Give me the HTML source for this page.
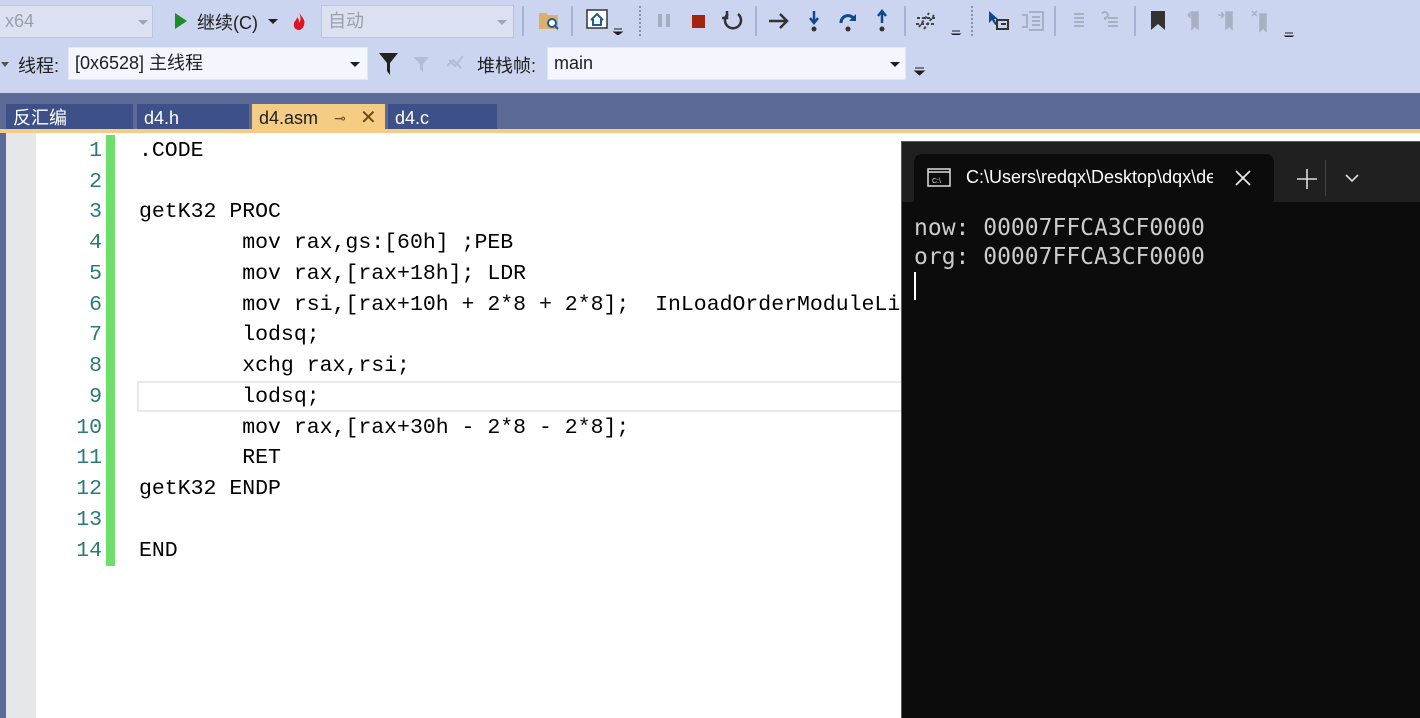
<!DOCTYPE html>
<html><head><meta charset="utf-8"><style>
*{margin:0;padding:0;box-sizing:border-box}
body{width:1420px;height:718px;overflow:hidden;background:#fff;font-family:"Liberation Sans","Noto Sans CJK SC",sans-serif;position:relative}
.abs{position:absolute}
.tb{left:0;top:0;width:1420px;height:93px;background:#ccd5f0}
.combo{position:absolute;border:1px solid #bcc5dc;font-size:18px;line-height:30px;padding-left:6px}
.arrow{position:absolute;width:0;height:0;border-left:5px solid transparent;border-right:5px solid transparent;border-top:5px solid #1e1e1e}
.sep{position:absolute;width:2px;background:#a8b3d3}
.tab{position:absolute;top:104px;height:28px;background:#3e5088;color:#fff;font-size:18px;line-height:28px;padding-left:7px}
.code{font-family:"Liberation Mono","DejaVu Sans Mono",monospace;font-size:21.5px}
.ln{position:absolute;left:40px;width:62px;text-align:right;color:#2b7a7a}
.cl{position:absolute;left:139px;white-space:pre;color:#000}
.term{font-family:"DejaVu Sans Mono","Liberation Mono",monospace;font-size:23px;color:#cccccc}
</style></head><body>
<div class="abs tb"></div>
<div class="combo" style="left:-2px;top:5px;width:155px;height:33px;background:#dbe1f1;color:#9aa0aa">x64</div>
<div class="arrow" style="left:138px;top:20px;border-top-color:#a0a6b4"></div>
<svg class="abs" style="left:174px;top:12px" width="14" height="18"><path d="M1 1L13 9L1 17Z" fill="#1f8a2c"/></svg>
<div class="abs" style="left:197px;top:9px;font-size:18px;color:#1e1e1e">继续(C)</div>
<div class="arrow" style="left:268px;top:19px"></div>
<svg class="abs" style="left:291px;top:11px" width="16" height="20"><path d="M8 1C10 6 15 8 13 14C12 18 9 19 8 19C5 19 2 17 3 12C4 9 6 9 6 6C8 8 8 10 8 12C10 10 10 6 8 1Z" fill="#e0141e"/></svg>
<div class="combo" style="left:321px;top:5px;width:193px;height:33px;background:#dbe1f1;color:#9aa0aa">自动</div>
<div class="arrow" style="left:497px;top:20px;border-top-color:#a0a6b4"></div>
<div class="sep" style="left:522px;top:6px;height:30px"></div>
<svg class="abs" style="left:537px;top:9px" width="24" height="22"><path d="M2 4h7l2 2h10v14H2Z" fill="#dcb067"/><circle cx="15" cy="14" r="4" fill="#fff" stroke="#1c5b9c" stroke-width="2"/><path d="M18 17l3 3" stroke="#1c5b9c" stroke-width="2"/></svg>
<div class="sep" style="left:571px;top:6px;height:30px"></div>
<svg class="abs" style="left:586px;top:9px" width="40" height="26"><rect x="1" y="1" width="20" height="18" fill="#fff" stroke="#333" stroke-width="1.5"/><path d="M5 11l6-6 6 6M7 10v6h8v-6" stroke="#1c5b9c" stroke-width="2" fill="none"/><path d="M28 20h8M28 23h8l-4 3z" stroke="#1e1e1e" fill="#1e1e1e"/></svg>
<div class="abs" style="left:639px;top:6px;width:4px;height:30px;border-left:2px dotted #8890a8"></div>
<svg class="abs" style="left:656px;top:12px" width="20" height="18"><rect x="2" y="2" width="4" height="13" fill="#a4acc2"/><rect x="10" y="2" width="4" height="13" fill="#a4acc2"/></svg>
<svg class="abs" style="left:690px;top:12px" width="18" height="18"><rect x="2" y="3" width="13" height="13" fill="#a1260d"/></svg>
<svg class="abs" style="left:721px;top:9px" width="24" height="24"><path d="M7 5A8 8 0 1 0 17 5" fill="none" stroke="#333" stroke-width="2.5"/><path d="M6 2v7h-5" fill="none" stroke="#333" stroke-width="2.5"/></svg>
<div class="sep" style="left:755px;top:6px;height:30px"></div>
<svg class="abs" style="left:766px;top:9px" width="130" height="24"><path d="M3 12h18M14 5l7 7-7 7" fill="none" stroke="#333" stroke-width="2.5"/><path d="M48 2v11M44 9l4 5 4-5" fill="none" stroke="#0e4a8a" stroke-width="2.5"/><circle cx="48" cy="20" r="2.5" fill="#333"/><path d="M75 14a7 7 0 0 1 13-4" fill="none" stroke="#0e4a8a" stroke-width="3"/><path d="M90 5v7h-7z" fill="#0e4a8a"/><circle cx="82" cy="20" r="2.5" fill="#333"/><path d="M116 14V3M112 7l4-5 4 5" fill="none" stroke="#0e4a8a" stroke-width="2.5"/><circle cx="116" cy="20" r="2.5" fill="#333"/></svg>
<div class="sep" style="left:904px;top:6px;height:30px"></div>
<svg class="abs" style="left:915px;top:9px" width="52" height="26"><path d="M4 18l10-14M9 20l10-14M2 9h20M1 15h20" stroke="#444" stroke-width="2" stroke-dasharray="3 2"/><path d="M37 22h8M37 25h8l-4 3z" stroke="#1e1e1e" fill="#1e1e1e"/></svg>
<div class="abs" style="left:971px;top:6px;width:4px;height:30px;border-left:2px dotted #8890a8"></div>
<svg class="abs" style="left:987px;top:9px" width="60" height="24"><path d="M2 2v12l3-3 3 5 2-1-3-5h4z" fill="#0e4a8a"/><rect x="10" y="11" width="11" height="9" fill="none" stroke="#333" stroke-width="2"/><path d="M14 15h5" stroke="#333" stroke-width="2"/><path d="M35 6h5v12h-5M42 3h14v18H42M45 8h8M45 12h8M45 16h8" stroke="#a8b0c4" stroke-width="2" fill="none"/></svg>
<div class="sep" style="left:1054px;top:6px;height:30px"></div>
<svg class="abs" style="left:1066px;top:9px" width="60" height="24"><path d="M8 5h10M8 9h10M8 13h10M8 17h10" stroke="#a8b0c4" stroke-width="2"/><path d="M36 5a3 3 0 1 1 3 4v2M42 9h10M42 13h10M42 17h10" stroke="#a8b0c4" stroke-width="2" fill="none"/></svg>
<div class="sep" style="left:1134px;top:6px;height:30px"></div>
<svg class="abs" style="left:1148px;top:9px" width="150" height="28"><path d="M3 2h14v19l-7-6-7 6z" fill="#333"/><path d="M44 3h6v17l-3-3-3 3zM46 6l-6 0M40 6l3-3M40 6l3 3" fill="#a8b0c4" stroke="#a8b0c4" stroke-width="1.5"/><path d="M78 3h6v17l-3-3-3 3zM70 6h6M76 6l-3-3M76 6l-3 3" fill="#a8b0c4" stroke="#a8b0c4" stroke-width="1.5"/><path d="M112 5h6v17l-3-3-3 3zM104 2l5 5M109 2l-5 5" fill="#a8b0c4" stroke="#a8b0c4" stroke-width="1.5"/><path d="M137 24h8M137 27h8l-4 3z" stroke="#1e1e1e" fill="#1e1e1e"/></svg>
<div class="arrow" style="left:1px;top:62px;border-top-color:#555;border-left-width:4px;border-right-width:4px"></div>
<div class="abs" style="left:18px;top:52px;font-size:18px;color:#1e1e1e">线程:</div>
<div class="combo" style="left:68px;top:47px;width:300px;height:33px;background:#f3f6fd;border-color:#e0e6f6;color:#1e1e1e">[0x6528] 主线程</div>
<div class="arrow" style="left:350px;top:62px"></div>
<svg class="abs" style="left:377px;top:50px" width="100" height="28"><path d="M2 3h19l-8 10v12l-3-4v-8z" fill="#222"/><path d="M36 7h16l-6 7v8l-3-3v-5z" fill="#b4bccf"/><path d="M72 10l6 6 8-10M70 16l6-6 8 8" stroke="#b4bccf" stroke-width="2" fill="none"/></svg>
<div class="abs" style="left:477px;top:52px;font-size:18px;color:#1e1e1e">堆栈帧:</div>
<div class="combo" style="left:547px;top:47px;width:359px;height:33px;background:#f3f6fd;border-color:#e0e6f6;color:#1e1e1e">main</div>
<div class="arrow" style="left:890px;top:62px"></div>
<svg class="abs" style="left:914px;top:66px" width="12" height="12"><path d="M1 2h9M1 5h9l-4.5 4z" stroke="#1e1e1e" fill="#1e1e1e"/></svg>
<div class="abs" style="left:0;top:93px;width:1420px;height:39px;background:#5b6a96"></div>
<div class="tab" style="left:6px;width:127px">反汇编</div>
<div class="tab" style="left:137px;width:112px">d4.h</div>
<div class="tab" style="left:252px;width:133px;background:#f5cc84;color:#1e1e1e">d4.asm<span style="position:absolute;left:82px;font-size:14px;color:#6b4a14">⊸</span><span style="position:absolute;left:108px;font-size:20px;color:#6b4a14">✕</span></div>
<div class="tab" style="left:388px;width:109px">d4.c</div>
<div class="abs" style="left:0;top:129px;width:1420px;height:4px;background:#f5cc84"></div>
<div class="abs" style="left:0;top:133px;width:6px;height:585px;background:#5b6a96"></div>
<div class="abs" style="left:6px;top:133px;width:30px;height:585px;background:#e6e7e8"></div>
<div class="abs" style="left:106px;top:135px;width:9px;height:431px;background:#6ddf6a"></div>
<div class="abs" style="left:137px;top:381px;width:780px;height:31px;border:2px solid #e8e8ee"></div>
<div class="code">
<div class="ln" style="top:139px">1</div><div class="cl" style="top:139px">.CODE</div>
<div class="ln" style="top:170px">2</div>
<div class="ln" style="top:200px">3</div><div class="cl" style="top:200px">getK32 PROC</div>
<div class="ln" style="top:231px">4</div><div class="cl" style="top:231px">        mov rax,gs:[60h] ;PEB</div>
<div class="ln" style="top:262px">5</div><div class="cl" style="top:262px">        mov rax,[rax+18h]; LDR</div>
<div class="ln" style="top:293px">6</div><div class="cl" style="top:293px">        mov rsi,[rax+10h + 2*8 + 2*8];  InLoadOrderModuleLi</div>
<div class="ln" style="top:323px">7</div><div class="cl" style="top:323px">        lodsq;</div>
<div class="ln" style="top:354px">8</div><div class="cl" style="top:354px">        xchg rax,rsi;</div>
<div class="ln" style="top:385px">9</div><div class="cl" style="top:385px">        lodsq;</div>
<div class="ln" style="top:416px">10</div><div class="cl" style="top:416px">        mov rax,[rax+30h - 2*8 - 2*8];</div>
<div class="ln" style="top:446px">11</div><div class="cl" style="top:446px">        RET</div>
<div class="ln" style="top:477px">12</div><div class="cl" style="top:477px">getK32 ENDP</div>
<div class="ln" style="top:508px">13</div>
<div class="ln" style="top:539px">14</div><div class="cl" style="top:539px">END</div>
</div>
<div class="abs" style="left:901px;top:141px;width:519px;height:577px;background:#0c0c0c;border-left:1px solid #5a5a5a;border-top:1px solid #5a5a5a"></div>
<div class="abs" style="left:902px;top:142px;width:518px;height:60px;background:#202020"></div>
<div class="abs" style="left:914px;top:154px;width:360px;height:48px;background:#0c0c0c;border-radius:8px 8px 0 0"></div>
<svg class="abs" style="left:927px;top:168px" width="26" height="20"><rect x="1" y="1" width="22" height="17" fill="none" stroke="#ddd" stroke-width="1.5"/><path d="M1 4h22" stroke="#ddd" stroke-width="1.5"/><text x="5" y="15" font-size="7" fill="#ddd" font-family="Liberation Sans">C:\</text></svg>
<div class="abs" style="left:966px;top:167px;width:247px;overflow:hidden;white-space:nowrap;font-size:18px;color:#fff">C:\Users\redqx\Desktop\dqx\debug</div>
<svg class="abs" style="left:1234px;top:169px" width="18" height="18"><path d="M2 2l14 14M16 2L2 16" stroke="#eee" stroke-width="1.6"/></svg>
<svg class="abs" style="left:1296px;top:168px" width="22" height="22"><path d="M11 1v20M1 11h20" stroke="#ddd" stroke-width="1.6"/></svg>
<div class="abs" style="left:1325px;top:160px;width:1px;height:36px;background:#444"></div>
<svg class="abs" style="left:1344px;top:173px" width="16" height="10"><path d="M2 2l6 6 6-6" stroke="#ddd" stroke-width="1.6" fill="none"/></svg>
<div class="term abs" style="left:914px;top:214px;line-height:29px;white-space:pre">now: 00007FFCA3CF0000
org: 00007FFCA3CF0000</div>
<div class="abs" style="left:914px;top:272px;width:2px;height:28px;background:#fff"></div>
</body></html>
